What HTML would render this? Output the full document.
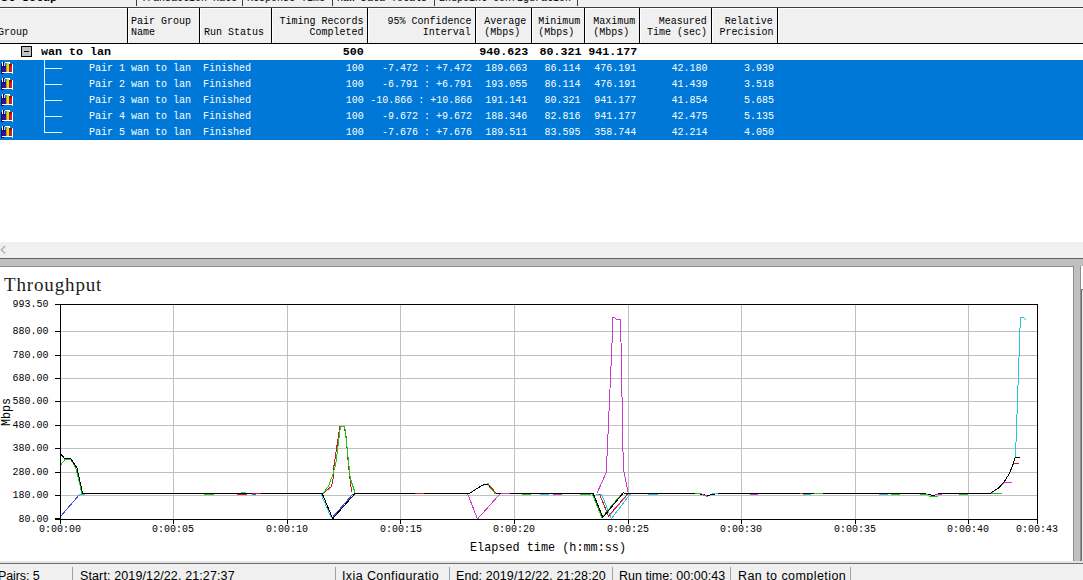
<!DOCTYPE html>
<html><head><meta charset="utf-8"><title>Throughput</title>
<style>
html,body{margin:0;padding:0;background:#fff}
body{width:1083px;height:580px;position:relative;overflow:hidden;font-family:"Liberation Mono",monospace;font-size:11px;line-height:12px;color:#000}
div,span{position:absolute;white-space:pre}
.t{transform:scaleX(.9091);transform-origin:0 0}
.r{transform:scaleX(.9091);transform-origin:100% 0}
.b{font-weight:bold;transform:scaleX(1.0606)}
.w{color:#fff}
.hl{background:#000;width:1px;top:8px;height:35px}
.sb{font-family:"Liberation Sans",sans-serif;font-size:12.5px;line-height:14px;top:569px;color:#000}
.sep{background:#a0a0a0;width:1px;top:567px;height:13px}
</style></head><body>

<div style="left:0;top:0;width:1083px;height:7px;background:#f0f0f0;overflow:hidden">
<span class="t b" style="left:-13px;top:-7.6px">Test Setup</span>
<span class="t" style="left:141px;top:-7.6px">Transaction Rate</span>
<span class="t" style="left:247px;top:-7.6px">Response Time</span>
<span class="t" style="left:337px;top:-7.6px">Raw Data Totals</span>
<span class="t" style="left:439px;top:-7.6px">Endpoint Configuration</span>
<span style="left:136px;top:0;width:1px;height:6px;background:#404040"></span>
<span style="left:242px;top:0;width:1px;height:6px;background:#404040"></span>
<span style="left:332px;top:0;width:1px;height:6px;background:#404040"></span>
<span style="left:434px;top:0;width:1px;height:6px;background:#404040"></span>
<span style="left:577px;top:0;width:1px;height:6px;background:#404040"></span>
</div>
<div style="left:0;top:7px;width:1083px;height:1px;background:#404040"></div>
<div style="left:0;top:8px;width:778px;height:35px;background:#f0f0f0"></div>
<div style="left:778px;top:8px;width:305px;height:35px;background:#f0f0f0"></div>
<div style="left:0;top:43px;width:1083px;height:1px;background:#000"></div>
<div style="left:0;top:8px;width:1083px;height:1px;background:#fff"></div>
<div class="hl" style="left:127px"></div>
<div style="left:128px;top:8px;width:1px;height:35px;background:#fff"></div>
<div class="hl" style="left:199px"></div>
<div style="left:200px;top:8px;width:1px;height:35px;background:#fff"></div>
<div class="hl" style="left:271px"></div>
<div style="left:272px;top:8px;width:1px;height:35px;background:#fff"></div>
<div class="hl" style="left:367px"></div>
<div style="left:368px;top:8px;width:1px;height:35px;background:#fff"></div>
<div class="hl" style="left:475px"></div>
<div style="left:476px;top:8px;width:1px;height:35px;background:#fff"></div>
<div class="hl" style="left:531px"></div>
<div style="left:532px;top:8px;width:1px;height:35px;background:#fff"></div>
<div class="hl" style="left:584px"></div>
<div style="left:585px;top:8px;width:1px;height:35px;background:#fff"></div>
<div class="hl" style="left:639px"></div>
<div style="left:640px;top:8px;width:1px;height:35px;background:#fff"></div>
<div class="hl" style="left:711px"></div>
<div style="left:712px;top:8px;width:1px;height:35px;background:#fff"></div>
<div class="hl" style="left:777px"></div>
<div style="left:778px;top:8px;width:1px;height:35px;background:#fff"></div>
<div class="t" style="left:-2px;top:26px">Group</div>
<div class="t" style="left:131px;top:15px">Pair Group</div>
<div class="t" style="left:131px;top:26px">Name</div>
<div class="t" style="left:204px;top:26px">Run Status</div>
<div class="r" style="right:720px;top:15px">Timing Records</div>
<div class="r" style="right:720px;top:26px">Completed</div>
<div class="r" style="right:612px;top:15px">95% Confidence</div>
<div class="r" style="right:612px;top:26px">Interval</div>
<div class="r" style="right:557px;top:15px">Average</div>
<div class="r" style="right:557px;top:26px">(Mbps) </div>
<div class="r" style="right:503px;top:15px">Minimum</div>
<div class="r" style="right:503px;top:26px">(Mbps) </div>
<div class="r" style="right:448px;top:15px">Maximum</div>
<div class="r" style="right:448px;top:26px">(Mbps) </div>
<div class="r" style="right:376px;top:15px">Measured</div>
<div class="r" style="right:376px;top:26px">Time (sec)</div>
<div class="r" style="right:310px;top:15px">Relative</div>
<div class="r" style="right:310px;top:26px">Precision</div>
<div style="left:21px;top:46px;width:9px;height:9px;border:1px solid #000;background:#c0c0c0"></div>
<div style="left:24px;top:51px;width:5px;height:1px;background:#000"></div>
<div class="t b" style="left:41px;top:46px">wan to lan</div>
<div class="r b" style="right:719px;top:46px">500</div>
<div class="r b" style="right:555px;top:46px">940.623</div>
<div class="r b" style="right:501px;top:46px">80.321</div>
<div class="r b" style="right:446px;top:46px">941.177</div>
<div style="left:0;top:60px;width:1083px;height:80px;background:#0078d7"></div>
<div style="left:44px;top:60px;width:1px;height:73px;background:#e8ffff"></div>
<svg width="14" height="15" viewBox="0 0 14 15" style="position:absolute;left:0;top:60px" shape-rendering="crispEdges">
<rect x="2" y="2" width="1" height="5" fill="#fff"/><rect x="3" y="2" width="1" height="5" fill="#0c0c28"/><rect x="4" y="3" width="1" height="4" fill="#c8d4f4"/>
<rect x="1" y="4" width="1" height="9" fill="#0c1058"/><rect x="2" y="7" width="4" height="5" fill="#2c10a4"/><rect x="2" y="6" width="4" height="1" fill="#1c1470"/>
<rect x="5" y="2" width="5" height="1" fill="#fff"/><rect x="9" y="3" width="1" height="1" fill="#fff"/>
<rect x="6" y="3" width="3" height="9" fill="#e6d622"/><rect x="6" y="3" width="1" height="9" fill="#b89c18"/>
<rect x="9" y="4" width="3" height="8" fill="#d0221a"/><rect x="9" y="4" width="3" height="2" fill="#7c1410"/><rect x="9" y="6" width="1" height="6" fill="#9c1812"/>
<rect x="12" y="4" width="1" height="8" fill="#fff"/>
<rect x="2" y="12" width="11" height="1" fill="#fff"/><rect x="1" y="13" width="3" height="1" fill="#0c1058"/><rect x="12" y="13" width="1" height="1" fill="#c0e4ff"/>
</svg>
<div style="left:44px;top:68px;width:18px;height:1px;background:#e8ffff"></div>
<div class="t w" style="left:89px;top:62px">Pair 1 wan to lan</div>
<div class="t w" style="left:203px;top:62px">Finished</div>
<div class="r w" style="right:719px;top:62px">100</div>
<div class="r w" style="right:611px;top:62px">-7.472 : +7.472</div>
<div class="r w" style="right:556px;top:62px">189.663</div>
<div class="r w" style="right:502px;top:62px">86.114</div>
<div class="r w" style="right:447px;top:62px">476.191</div>
<div class="r w" style="right:375px;top:62px">42.180</div>
<div class="r w" style="right:309px;top:62px">3.939</div>
<svg width="14" height="15" viewBox="0 0 14 15" style="position:absolute;left:0;top:76px" shape-rendering="crispEdges">
<rect x="2" y="2" width="1" height="5" fill="#fff"/><rect x="3" y="2" width="1" height="5" fill="#0c0c28"/><rect x="4" y="3" width="1" height="4" fill="#c8d4f4"/>
<rect x="1" y="4" width="1" height="9" fill="#0c1058"/><rect x="2" y="7" width="4" height="5" fill="#2c10a4"/><rect x="2" y="6" width="4" height="1" fill="#1c1470"/>
<rect x="5" y="2" width="5" height="1" fill="#fff"/><rect x="9" y="3" width="1" height="1" fill="#fff"/>
<rect x="6" y="3" width="3" height="9" fill="#e6d622"/><rect x="6" y="3" width="1" height="9" fill="#b89c18"/>
<rect x="9" y="4" width="3" height="8" fill="#d0221a"/><rect x="9" y="4" width="3" height="2" fill="#7c1410"/><rect x="9" y="6" width="1" height="6" fill="#9c1812"/>
<rect x="12" y="4" width="1" height="8" fill="#fff"/>
<rect x="2" y="12" width="11" height="1" fill="#fff"/><rect x="1" y="13" width="3" height="1" fill="#0c1058"/><rect x="12" y="13" width="1" height="1" fill="#c0e4ff"/>
</svg>
<div style="left:44px;top:84px;width:18px;height:1px;background:#e8ffff"></div>
<div class="t w" style="left:89px;top:78px">Pair 2 wan to lan</div>
<div class="t w" style="left:203px;top:78px">Finished</div>
<div class="r w" style="right:719px;top:78px">100</div>
<div class="r w" style="right:611px;top:78px">-6.791 : +6.791</div>
<div class="r w" style="right:556px;top:78px">193.055</div>
<div class="r w" style="right:502px;top:78px">86.114</div>
<div class="r w" style="right:447px;top:78px">476.191</div>
<div class="r w" style="right:375px;top:78px">41.439</div>
<div class="r w" style="right:309px;top:78px">3.518</div>
<svg width="14" height="15" viewBox="0 0 14 15" style="position:absolute;left:0;top:92px" shape-rendering="crispEdges">
<rect x="2" y="2" width="1" height="5" fill="#fff"/><rect x="3" y="2" width="1" height="5" fill="#0c0c28"/><rect x="4" y="3" width="1" height="4" fill="#c8d4f4"/>
<rect x="1" y="4" width="1" height="9" fill="#0c1058"/><rect x="2" y="7" width="4" height="5" fill="#2c10a4"/><rect x="2" y="6" width="4" height="1" fill="#1c1470"/>
<rect x="5" y="2" width="5" height="1" fill="#fff"/><rect x="9" y="3" width="1" height="1" fill="#fff"/>
<rect x="6" y="3" width="3" height="9" fill="#e6d622"/><rect x="6" y="3" width="1" height="9" fill="#b89c18"/>
<rect x="9" y="4" width="3" height="8" fill="#d0221a"/><rect x="9" y="4" width="3" height="2" fill="#7c1410"/><rect x="9" y="6" width="1" height="6" fill="#9c1812"/>
<rect x="12" y="4" width="1" height="8" fill="#fff"/>
<rect x="2" y="12" width="11" height="1" fill="#fff"/><rect x="1" y="13" width="3" height="1" fill="#0c1058"/><rect x="12" y="13" width="1" height="1" fill="#c0e4ff"/>
</svg>
<div style="left:44px;top:100px;width:18px;height:1px;background:#e8ffff"></div>
<div class="t w" style="left:89px;top:94px">Pair 3 wan to lan</div>
<div class="t w" style="left:203px;top:94px">Finished</div>
<div class="r w" style="right:719px;top:94px">100</div>
<div class="r w" style="right:611px;top:94px">-10.866 : +10.866</div>
<div class="r w" style="right:556px;top:94px">191.141</div>
<div class="r w" style="right:502px;top:94px">80.321</div>
<div class="r w" style="right:447px;top:94px">941.177</div>
<div class="r w" style="right:375px;top:94px">41.854</div>
<div class="r w" style="right:309px;top:94px">5.685</div>
<svg width="14" height="15" viewBox="0 0 14 15" style="position:absolute;left:0;top:108px" shape-rendering="crispEdges">
<rect x="2" y="2" width="1" height="5" fill="#fff"/><rect x="3" y="2" width="1" height="5" fill="#0c0c28"/><rect x="4" y="3" width="1" height="4" fill="#c8d4f4"/>
<rect x="1" y="4" width="1" height="9" fill="#0c1058"/><rect x="2" y="7" width="4" height="5" fill="#2c10a4"/><rect x="2" y="6" width="4" height="1" fill="#1c1470"/>
<rect x="5" y="2" width="5" height="1" fill="#fff"/><rect x="9" y="3" width="1" height="1" fill="#fff"/>
<rect x="6" y="3" width="3" height="9" fill="#e6d622"/><rect x="6" y="3" width="1" height="9" fill="#b89c18"/>
<rect x="9" y="4" width="3" height="8" fill="#d0221a"/><rect x="9" y="4" width="3" height="2" fill="#7c1410"/><rect x="9" y="6" width="1" height="6" fill="#9c1812"/>
<rect x="12" y="4" width="1" height="8" fill="#fff"/>
<rect x="2" y="12" width="11" height="1" fill="#fff"/><rect x="1" y="13" width="3" height="1" fill="#0c1058"/><rect x="12" y="13" width="1" height="1" fill="#c0e4ff"/>
</svg>
<div style="left:44px;top:116px;width:18px;height:1px;background:#e8ffff"></div>
<div class="t w" style="left:89px;top:110px">Pair 4 wan to lan</div>
<div class="t w" style="left:203px;top:110px">Finished</div>
<div class="r w" style="right:719px;top:110px">100</div>
<div class="r w" style="right:611px;top:110px">-9.672 : +9.672</div>
<div class="r w" style="right:556px;top:110px">188.346</div>
<div class="r w" style="right:502px;top:110px">82.816</div>
<div class="r w" style="right:447px;top:110px">941.177</div>
<div class="r w" style="right:375px;top:110px">42.475</div>
<div class="r w" style="right:309px;top:110px">5.135</div>
<svg width="14" height="15" viewBox="0 0 14 15" style="position:absolute;left:0;top:124px" shape-rendering="crispEdges">
<rect x="2" y="2" width="1" height="5" fill="#fff"/><rect x="3" y="2" width="1" height="5" fill="#0c0c28"/><rect x="4" y="3" width="1" height="4" fill="#c8d4f4"/>
<rect x="1" y="4" width="1" height="9" fill="#0c1058"/><rect x="2" y="7" width="4" height="5" fill="#2c10a4"/><rect x="2" y="6" width="4" height="1" fill="#1c1470"/>
<rect x="5" y="2" width="5" height="1" fill="#fff"/><rect x="9" y="3" width="1" height="1" fill="#fff"/>
<rect x="6" y="3" width="3" height="9" fill="#e6d622"/><rect x="6" y="3" width="1" height="9" fill="#b89c18"/>
<rect x="9" y="4" width="3" height="8" fill="#d0221a"/><rect x="9" y="4" width="3" height="2" fill="#7c1410"/><rect x="9" y="6" width="1" height="6" fill="#9c1812"/>
<rect x="12" y="4" width="1" height="8" fill="#fff"/>
<rect x="2" y="12" width="11" height="1" fill="#fff"/><rect x="1" y="13" width="3" height="1" fill="#0c1058"/><rect x="12" y="13" width="1" height="1" fill="#c0e4ff"/>
</svg>
<div style="left:44px;top:132px;width:18px;height:1px;background:#e8ffff"></div>
<div class="t w" style="left:89px;top:126px">Pair 5 wan to lan</div>
<div class="t w" style="left:203px;top:126px">Finished</div>
<div class="r w" style="right:719px;top:126px">100</div>
<div class="r w" style="right:611px;top:126px">-7.676 : +7.676</div>
<div class="r w" style="right:556px;top:126px">189.511</div>
<div class="r w" style="right:502px;top:126px">83.595</div>
<div class="r w" style="right:447px;top:126px">358.744</div>
<div class="r w" style="right:375px;top:126px">42.214</div>
<div class="r w" style="right:309px;top:126px">4.050</div>
<div style="left:0;top:242px;width:1083px;height:16px;background:#f0f0f0"></div>
<svg width="8" height="12" style="position:absolute;left:0;top:244px"><path d="M5.2 2 L1.4 5.8 L5.2 9.5" stroke="#b4b4b4" stroke-width="1.6" fill="none"/></svg>
<div style="left:0;top:258px;width:1083px;height:1px;background:#646464"></div>
<div style="left:0;top:259px;width:1083px;height:7px;background:#c0c0c0"></div>
<div style="left:0;top:266px;width:1081px;height:1px;background:#8c8c8c"></div>
<div style="left:1073px;top:266px;width:8px;height:297px;background:#c0c0c0;border-left:1px solid #8c8c8c;border-right:1px solid #8c8c8c;box-sizing:border-box"></div>
<div style="left:1081px;top:289px;width:2px;height:274px;background:#e8e8e8;border-left:1px solid #707070;border-top:1px solid #707070;box-sizing:border-box"></div>
<div style="left:0;top:561px;width:1083px;height:2px;background:#e4e4e4"></div>
<div style="left:0;top:563px;width:1083px;height:1px;background:#6e6e6e"></div>
<div style="left:0;top:564px;width:1083px;height:16px;background:#f0f0f0"></div>
<div class="sep" style="left:72px"></div>
<div class="sep" style="left:335px"></div>
<div class="sep" style="left:449px"></div>
<div class="sep" style="left:612px"></div>
<div class="sep" style="left:730px"></div>
<div class="sep" style="left:850px"></div>
<div class="sb" style="left:-2px;letter-spacing:-0.1px">Pairs: 5</div>
<div class="sb" style="left:80px;letter-spacing:0.12px">Start: 2019/12/22, 21:27:37</div>
<div class="sb" style="left:342px;letter-spacing:0.4px">Ixia Configuratio</div>
<div class="sb" style="left:456px;letter-spacing:0.1px">End: 2019/12/22, 21:28:20</div>
<div class="sb" style="left:619px;letter-spacing:0.03px">Run time: 00:00:43</div>
<div class="sb" style="left:738px;letter-spacing:0.44px">Ran to completion</div>
<div style="left:4px;top:274.4px;font-family:'Liberation Serif',serif;font-size:19px;line-height:22px;letter-spacing:.85px;color:#1c1c1c">Throughput</div>
<svg width="1083" height="580" viewBox="0 0 1083 580" style="position:absolute;left:0;top:0" font-family="Liberation Mono, monospace">
<g shape-rendering="crispEdges" fill="none">
<path d="M61 495.5H1037" stroke="#c0c0c0"/>
<path d="M55 495.5H60" stroke="#000"/>
<path d="M61 472.5H1037" stroke="#c0c0c0"/>
<path d="M55 472.5H60" stroke="#000"/>
<path d="M61 448.5H1037" stroke="#c0c0c0"/>
<path d="M55 448.5H60" stroke="#000"/>
<path d="M61 425.5H1037" stroke="#c0c0c0"/>
<path d="M55 425.5H60" stroke="#000"/>
<path d="M61 401.5H1037" stroke="#c0c0c0"/>
<path d="M55 401.5H60" stroke="#000"/>
<path d="M61 378.5H1037" stroke="#c0c0c0"/>
<path d="M55 378.5H60" stroke="#000"/>
<path d="M61 355.5H1037" stroke="#c0c0c0"/>
<path d="M55 355.5H60" stroke="#000"/>
<path d="M61 331.5H1037" stroke="#c0c0c0"/>
<path d="M55 331.5H60" stroke="#000"/>
<path d="M173.5 305V519" stroke="#c0c0c0"/>
<path d="M173.5 520V524" stroke="#000"/>
<path d="M287.5 305V519" stroke="#c0c0c0"/>
<path d="M287.5 520V524" stroke="#000"/>
<path d="M400.5 305V519" stroke="#c0c0c0"/>
<path d="M400.5 520V524" stroke="#000"/>
<path d="M514.5 305V519" stroke="#c0c0c0"/>
<path d="M514.5 520V524" stroke="#000"/>
<path d="M628.5 305V519" stroke="#c0c0c0"/>
<path d="M628.5 520V524" stroke="#000"/>
<path d="M741.5 305V519" stroke="#c0c0c0"/>
<path d="M741.5 520V524" stroke="#000"/>
<path d="M855.5 305V519" stroke="#c0c0c0"/>
<path d="M855.5 520V524" stroke="#000"/>
<path d="M968.5 305V519" stroke="#c0c0c0"/>
<path d="M968.5 520V524" stroke="#000"/>
<path d="M1037.5 520V524" stroke="#000"/>
<path d="M55 304.5H60M55 519.5H60M55 518.5H60M60.5 520V524" stroke="#000"/>
</g>
<g fill="none" stroke-width="1" shape-rendering="crispEdges">
<path stroke="#4848dc" d="M60.5 516.5L80 494M331.5 518.5L353 494"/>
<path stroke="#28c8d8" d="M79 494.5H85M321 494L331.5 518.5M596 494.5H601.7L611.3 518.7L630.3 494M1015.5 457L1020.4 317.5H1023L1026 319.5"/>
<path stroke="#c83cc8" d="M467.5 493.5L477.5 519L499.8 494M596.8 493.5L606.3 472.5L612.6 330V317.5H614.7L616.7 319.5H620.6L623.3 468L628.1 492M990 493.5L999 488L1004.2 482.5H1011.5"/>
<path stroke="#e070e0" d="M609 516L628 494"/>
<path stroke="#c82020" d="M323 493.5L331.6 486.3L333 479.4L333.6 468.3L337.1 444.9L339.9 426.5H344L346.1 436.6L348.1 461.4L349.5 475.2L351.6 491.8M599.5 494L608.5 516L627.6 494M990 493.5L999 487.6L1004.2 481.7L1009.3 473.7L1013.5 463.5H1018.8"/>
<path stroke="#20c820" d="M60.5 465L65 459.5H71L76 469L82 493.5M323 493.5L328.8 485.6L333 473.9L335.7 464.2L340.5 426.5H344.7L347.5 451.8L350.2 478L355 492.5M468.5 494L481.5 485.5L487.5 484.5L495.5 494M592.3 494L601.8 517.5L622.5 493"/>
<path stroke="#000" d="M60.5 454L65 458.8L71 459L77 468L82.6 493.5H322.2L332.7 518.7L355 493.5H469.4L482.2 485.2L487.9 484L496.4 493.5H593.2L602.8 517.5L623.6 492.5L625 493.5H697L707.5 495.5L717 493.5H923L933.5 495.5L940 493.5H990L999 487.6L1004.2 481.7L1009.3 473.7L1013 464.2L1015.1 457.5H1019.5"/>
<path stroke="#c82020" d="M488.5 484.5L496.5 493.5M237 494.5H247M252 493.5H261M415 493.5H424M800 493.5H803"/>
<path stroke="#20c820" d="M204 494.5H214M522 494.5H531M580 494.5H591M695 493.5H702M814 493.5H823M891 494.5H900M920 494.5H928M929 496.5H938M959 494.5H968M991 493.5H1002"/>
<path stroke="#c83cc8" d="M501 493.5H510M553 494.5H562M702 494.5L708 496.5M750 494.5H758M935 494.5H942"/>
<path stroke="#28c8d8" d="M241 492.5H246M487 483.5H489M540 494.5H549M648 494.5H658M712 493.5H718M803 494.5H811M879 494.5H888"/>
<path stroke="#4848dc" d="M252 494.5H256"/>
</g>

<g shape-rendering="crispEdges" fill="none" stroke="#000"><path d="M60.5 304V520M60 519.5H1038M60 304.5H1038M1037.5 305V520"/></g>
</svg>
<div class="r" style="right:1034px;top:298px">993.50</div>
<div class="r" style="right:1034px;top:325px">880.00</div>
<div class="r" style="right:1034px;top:349px">780.00</div>
<div class="r" style="right:1034px;top:372px">680.00</div>
<div class="r" style="right:1034px;top:395px">580.00</div>
<div class="r" style="right:1034px;top:419px">480.00</div>
<div class="r" style="right:1034px;top:442px">380.00</div>
<div class="r" style="right:1034px;top:466px">280.00</div>
<div class="r" style="right:1034px;top:489px">180.00</div>
<div class="r" style="right:1034px;top:513px"> 80.00</div>
<div class="t" style="left:39px;top:523px">0:00:00</div>
<div class="t" style="left:152px;top:523px">0:00:05</div>
<div class="t" style="left:266px;top:523px">0:00:10</div>
<div class="t" style="left:380px;top:523px">0:00:15</div>
<div class="t" style="left:493px;top:523px">0:00:20</div>
<div class="t" style="left:607px;top:523px">0:00:25</div>
<div class="t" style="left:720px;top:523px">0:00:30</div>
<div class="t" style="left:834px;top:523px">0:00:35</div>
<div class="t" style="left:947px;top:523px">0:00:40</div>
<div class="t" style="left:1016px;top:523px">0:00:43</div>
<div class="t" style="left:470px;top:541px;font-size:13px;line-height:14px">Elapsed time (h:mm:ss)</div>
<div style="left:0px;top:426px;font-size:13px;line-height:14px;transform:rotate(-90deg) scaleX(.8974);transform-origin:0 0">Mbps</div>
</body></html>
